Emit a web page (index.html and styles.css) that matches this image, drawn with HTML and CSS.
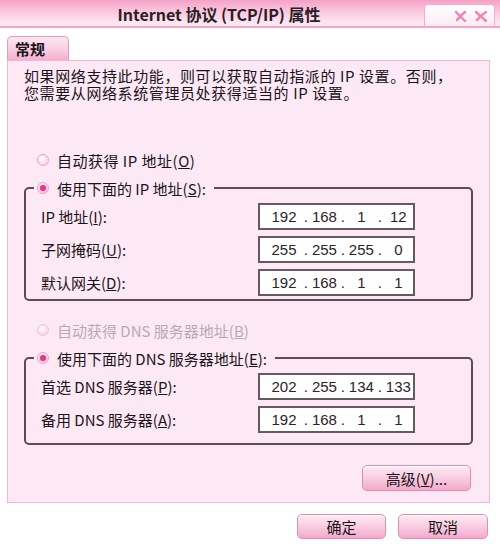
FILE: index.html
```html
<!DOCTYPE html>
<html lang="zh-CN">

<head>
  <meta charset="UTF-8">
  <meta name="viewport" content="width=device-width, initial-scale=1.0">
  <title>Internet 协议 (TCP/IP) 属性</title>
  <link rel="stylesheet" href="styles.css">
</head>

<body>
  <div class="window">
    <div class="titlebar">
      <div class="title">Internet 协议 (TCP/IP) 属性</div>
      <div class="close">
        <svg width="40" height="16" viewBox="0 0 40 16">
          <path d="M5 4 L14 13 M14 4 Q10 7 6 12" />
          <path d="M25 4 L35 13 M35 4 Q30 7 26 12" />
        </svg>
      </div>
    </div>

    <div class="tabs"><span class="tab">常规</span></div>

    <div class="panel">
      <p class="desc">如果网络支持此功能，则可以获取自动指派的 IP 设置。否则，<br>您需要从网络系统管理员处获得适当的 IP 设置。</p>

      <label class="radio opt-ip"><span class="dot"></span><span>自动获得 IP 地址(<u>O</u>)</span></label>
      <fieldset class="group group-ip">
        <legend><label class="radio"><span class="dot on"></span><span>使用下面的 IP 地址(<u>S</u>):</span></label></legend>
        <div class="row">
          <span>IP 地址(<u>I</u>):</span>
          <div class="ipbox"><i class="n1">192</i><b>.</b><i>168</i><b>.</b><i>1</i><b>.</b><i>12</i></div>
        </div>
        <div class="row">
          <span>子网掩码(<u>U</u>):</span>
          <div class="ipbox"><i class="n1">255</i><b>.</b><i>255</i><b>.</b><i>255</i><b>.</b><i>0</i></div>
        </div>
        <div class="row">
          <span>默认网关(<u>D</u>):</span>
          <div class="ipbox"><i class="n1">192</i><b>.</b><i>168</i><b>.</b><i>1</i><b>.</b><i>1</i></div>
        </div>
      </fieldset>

      <label class="radio opt-dns disabled"><span class="dot"></span><span>自动获得 DNS 服务器地址(<u>B</u>)</span></label>
      <fieldset class="group group-dns">
        <legend><label class="radio"><span class="dot on"></span><span>使用下面的 DNS 服务器地址(<u>E</u>):</span></label></legend>
        <div class="row">
          <span>首选 DNS 服务器(<u>P</u>):</span>
          <div class="ipbox"><i class="n1">202</i><b>.</b><i>255</i><b>.</b><i>134</i><b>.</b><i>133</i></div>
        </div>
        <div class="row">
          <span>备用 DNS 服务器(<u>A</u>):</span>
          <div class="ipbox"><i class="n1">192</i><b>.</b><i>168</i><b>.</b><i>1</i><b>.</b><i>1</i></div>
        </div>
      </fieldset>

      <div class="adv-row">
        <button class="btn btn-adv">高级(<u>V</u>)...</button>
      </div>
    </div>

    <div class="footer">
      <button class="btn btn-ok">确定</button>
      <button class="btn btn-cancel">取消</button>
    </div>
  </div>
</body>

</html>
```

FILE: styles.css
```css
html,
body {
  margin: 0;
}

body {
  font-family: "Noto Sans CJK SC", "Noto Sans", sans-serif;
  font-size: 15px;
  color: #1a1418;
}

.window {
  width: 500px;
  height: 550px;
  background: #fff;
  overflow: hidden;
}

/* 标题栏 */
.titlebar {
  display: flex;
  align-items: flex-end;
  height: 26px;
  border-bottom: 2px solid #f3a6c9;
  background: linear-gradient(#f4a2c7 0%, #f9c9df 45%, #fde7f1 90%);
}

.title {
  flex: 1;
  align-self: stretch;
  padding-left: 14px;
  line-height: 28px;
  text-align: center;
  font-weight: bold;
  font-size: 16px;
  color: #2a2026;
}

.close {
  display: flex;
  align-items: center;
  justify-content: flex-end;
  box-sizing: border-box;
  width: 71px;
  height: 22px;
  margin-right: 5px;
  padding-right: 3px;
  border: 1px solid #f2aecd;
  border-bottom: 0;
  border-radius: 4px 4px 0 0;
  background: linear-gradient(#fff, #fdeaf3);
}

.close path {
  fill: none;
  stroke: #f283b5;
  stroke-width: 2.4;
  stroke-linecap: round;
}

/* 选项卡 */
.tabs {
  padding: 8px 0 0 7px;
  height: 24px;
}

.tab {
  display: inline-block;
  box-sizing: border-box;
  width: 62px;
  height: 24px;
  padding-left: 7px;
  line-height: 23px;
  font-weight: bold;
  border: 1px solid #e79cbf;
  border-bottom: 0;
  border-radius: 5px 5px 0 0;
  background: linear-gradient(#fde9f2, #f8c3dc 70%, #f4b0cf);
}

.panel {
  box-sizing: border-box;
  width: 483px;
  height: 443px;
  margin-left: 7px;
  padding: 6px 0 0 16px;
  border: 1px solid #f2b9d6;
  background: #fde9f5;
}

.desc {
  margin: 0;
  line-height: 17px;
  letter-spacing: 0.6px;
}

/* 单选按钮 */
.radio {
  display: flex;
  align-items: center;
  gap: 8px;
  height: 20px;
  white-space: nowrap;
}

.radio .dot {
  position: relative;
  box-sizing: border-box;
  width: 12px;
  height: 12px;
  border: 1px solid #eaa6c6;
  border-radius: 50%;
  background: radial-gradient(circle at 40% 35%, #fff 0%, #fbdbea 60%, #f5bcd7 100%);
}

.radio .dot.on::after {
  content: "";
  position: absolute;
  left: 2px;
  top: 2px;
  width: 6px;
  height: 6px;
  border-radius: 50%;
  background: #e2398a;
  box-shadow: 0 0 2px #f07ab0;
}

.radio.disabled {
  color: #b9a9b2;
}

.radio.disabled .dot {
  border-color: #f1c3d8;
}

.opt-ip {
  margin: 49px 0 0 13px;
  letter-spacing: 0.5px;
}

.opt-dns {
  margin: 19px 0 0 13px;
}

/* 分组框 */
.group {
  box-sizing: border-box;
  width: 449px;
  margin: 8px 0 0;
  padding: 0 0 3px;
  border: 2px solid #5e4b55;
  border-radius: 5px;
}

.group legend {
  margin-left: 8px;
  padding: 0 8px 0 3px;
}

.group-dns {
  padding-bottom: 10px;
}

.row {
  display: grid;
  grid-template-columns: 217px 157px;
  align-items: center;
  height: 27px;
  margin-top: 6px;
  padding-left: 15px;
  white-space: nowrap;
}

.row:first-of-type {
  margin-top: 5px;
}

.ipbox {
  display: flex;
  align-items: center;
  box-sizing: border-box;
  height: 27px;
  padding-left: 6px;
  border: 2px solid #685862;
  background: #fff;
  font-family: "Liberation Sans", Arial, sans-serif;
  font-size: 15px;
  color: #2b2429;
}

.ipbox i {
  width: 30px;
  font-style: normal;
  text-align: center;
}

.ipbox i.n1 {
  width: 37px;
}

.ipbox b {
  width: 8px;
  font-weight: normal;
  text-align: center;
}

/* 按钮 */
.btn {
  box-sizing: border-box;
  height: 26px;
  padding: 0;
  font-family: inherit;
  font-size: 15px;
  color: #1a1418;
  border: 1px solid #e08db3;
  border-radius: 5px;
  background: linear-gradient(#fdebf4, #f9c9df 55%, #f3aacb);
  box-shadow: inset 0 1px 0 #fff;
}

.adv-row {
  display: flex;
  justify-content: flex-end;
  width: 447px;
  margin-top: 20px;
}

.btn-adv {
  width: 109px;
}

.footer {
  display: flex;
  justify-content: flex-end;
  gap: 12px;
  margin-top: 11px;
  padding-right: 12px;
}

.btn-ok {
  width: 89px;
  height: 25px;
}

.btn-cancel {
  width: 90px;
  height: 25px;
}
```
